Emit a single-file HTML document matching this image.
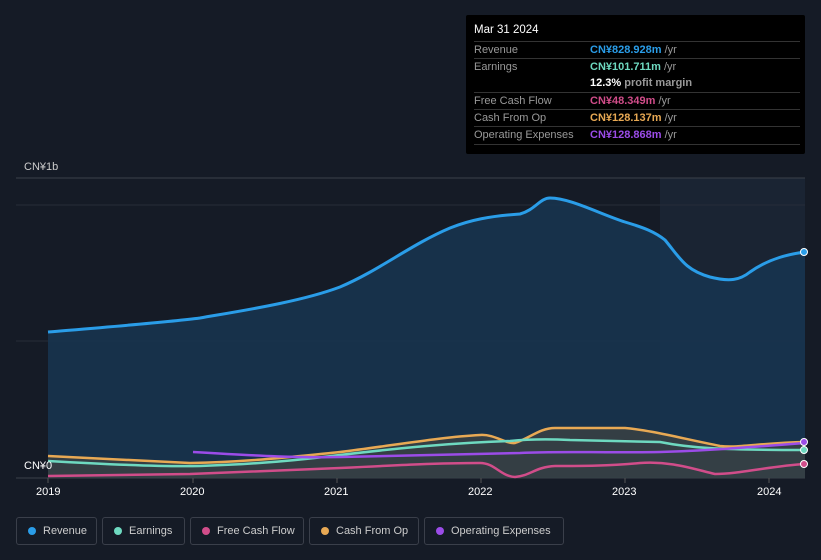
<!DOCTYPE html><html><head><style>
html,body{margin:0;width:821px;height:560px;overflow:hidden}
body{background:#151b26;font-family:"Liberation Sans",sans-serif;position:relative}
.tt{position:absolute;left:466px;top:15px;width:339px;height:139px;background:#000;border-radius:2px;font-size:11px;color:#999}
.tt .h{position:absolute;left:8px;top:9px;color:#fff;font-size:11.5px}
.row{position:absolute;left:8px;width:326px;border-top:1px solid #333;height:17px;line-height:17px;white-space:nowrap}
.row span{position:absolute;left:116px}
.leg{position:absolute;top:517px;height:28px;border:1px solid #3a3f4a;border-radius:3px;color:#ccc;font-size:11px;line-height:26px;box-sizing:border-box;padding-left:26px;white-space:nowrap}
.leg i{position:absolute;left:11px;top:9px;width:8px;height:8px;border-radius:50%}
.ax{position:absolute;color:#fff;font-size:11px}
</style></head><body>
<svg width="821" height="560" style="position:absolute;left:0;top:0">
<rect x="660" y="178" width="145" height="300" fill="#1a2433"/>
<line x1="16" y1="178" x2="805" y2="178" stroke="#3a404a"/>
<line x1="16" y1="205" x2="805" y2="205" stroke="#262d38"/>
<line x1="16" y1="341" x2="805" y2="341" stroke="#262d38"/>
<line x1="16" y1="478" x2="805" y2="478" stroke="#3a404a"/>
<path d="M48,332 C120,326 170,322 200,318 C240,311 300,302 340,287 C380,270 410,245 450,228 C470,220 490,216 520,214 C535,210 540,198 550,198 C570,198 600,214 625,222 C645,228 655,232 665,240 C680,258 685,270 710,277 C730,282 740,280 750,272 C770,258 790,254 805,252 L805,478 L48,478 Z" fill="#17344f" fill-opacity="0.9"/>
<path d="M48,332 C120,326 170,322 200,318 C240,311 300,302 340,287 C380,270 410,245 450,228 C470,220 490,216 520,214 C535,210 540,198 550,198 C570,198 600,214 625,222 C645,228 655,232 665,240 C680,258 685,270 710,277 C730,282 740,280 750,272 C770,258 790,254 805,252" fill="none" stroke="#2a9de8" stroke-width="3"/>
<path d="M48,456 L190,463 C250,462 300,456 340,452 C390,446 440,437 480,435 C495,434 505,444 515,443 C530,438 540,428 555,428 L625,428 C650,430 680,438 720,446 C740,448 760,443 805,442 L805,478 L48,478Z" fill="#6b5a3a" fill-opacity="0.35"/>
<path d="M48,456 L190,463 C250,462 300,456 340,452 C390,446 440,437 480,435 C495,434 505,444 515,443 C530,438 540,428 555,428 L625,428 C650,430 680,438 720,446 C740,448 760,443 805,442" fill="none" stroke="#e8a954" stroke-width="2.5"/>
<path d="M48,461 C100,464 160,467 200,466 C260,464 300,460 340,455 C400,448 450,443 510,441 C530,439 550,439 570,440 L660,442 C690,448 720,450 805,450" fill="none" stroke="#6ed9c0" stroke-width="2.5"/>
<path d="M193,452 C260,456 300,458 340,457 C400,456 450,454 520,453 C560,451 600,453 660,452 C700,451 740,448 805,443" fill="none" stroke="#9b4ce8" stroke-width="2.5"/>
<path d="M48,476 L190,474 C250,472 300,470 340,468 C400,465 440,463 480,463 C495,463 500,476 515,477 C530,476 535,467 555,466 C580,466 610,466 640,463 C670,461 690,468 715,474 C740,474 770,466 805,464" fill="none" stroke="#d14d8a" stroke-width="2.5"/>
<circle cx="804" cy="252" r="3.5" fill="#2a9de8" stroke="#fff"/>
<circle cx="804" cy="442" r="3.5" fill="#9b4ce8" stroke="#fff"/>
<circle cx="804" cy="450" r="3.5" fill="#6ed9c0" stroke="#fff"/>
<circle cx="804" cy="464" r="3.5" fill="#d14d8a" stroke="#fff"/>
<g stroke="#555"><line x1="48" y1="478" x2="48" y2="483"/><line x1="193" y1="478" x2="193" y2="483"/><line x1="337" y1="478" x2="337" y2="483"/><line x1="481" y1="478" x2="481" y2="483"/><line x1="625" y1="478" x2="625" y2="483"/><line x1="769" y1="478" x2="769" y2="483"/></g>
</svg>
<div class="ax" style="left:24px;top:161px;color:#ccc">CN¥1b</div>
<div class="ax" style="left:24px;top:460px">CN¥0</div>
<div class="ax" style="left:36px;top:486px">2019</div>
<div class="ax" style="left:180px;top:486px">2020</div>
<div class="ax" style="left:324px;top:486px">2021</div>
<div class="ax" style="left:468px;top:486px">2022</div>
<div class="ax" style="left:612px;top:486px">2023</div>
<div class="ax" style="left:757px;top:486px">2024</div>
<div class="tt"><div class="h">Mar 31 2024</div>
<div class="row" style="top:26px">Revenue<span style="color:#2a9de8;font-weight:bold">CN¥828.928m <b style="color:#999;font-weight:normal">/yr</b></span></div>
<div class="row" style="top:43px">Earnings<span style="color:#6ed9c0;font-weight:bold">CN¥101.711m <b style="color:#999;font-weight:normal">/yr</b></span></div>
<div class="row" style="top:60px;border:none"><span style="color:#fff;font-weight:bold">12.3% <b style="color:#999;font-weight:bold">profit margin</b></span></div>
<div class="row" style="top:77px">Free Cash Flow<span style="color:#d14d8a;font-weight:bold">CN¥48.349m <b style="color:#999;font-weight:normal">/yr</b></span></div>
<div class="row" style="top:94px">Cash From Op<span style="color:#e8a954;font-weight:bold">CN¥128.137m <b style="color:#999;font-weight:normal">/yr</b></span></div>
<div class="row" style="top:111px">Operating Expenses<span style="color:#9b4ce8;font-weight:bold">CN¥128.868m <b style="color:#999;font-weight:normal">/yr</b></span></div>
<div class="row" style="top:129px;height:1px"></div>
</div>
<div class="leg" style="left:16px;width:81px"><i style="background:#2a9de8"></i>Revenue</div>
<div class="leg" style="left:102px;width:83px"><i style="background:#6ed9c0"></i>Earnings</div>
<div class="leg" style="left:190px;width:114px"><i style="background:#d14d8a"></i>Free Cash Flow</div>
<div class="leg" style="left:309px;width:110px"><i style="background:#e8a954"></i>Cash From Op</div>
<div class="leg" style="left:424px;width:140px"><i style="background:#9b4ce8"></i>Operating Expenses</div>
</body></html>
